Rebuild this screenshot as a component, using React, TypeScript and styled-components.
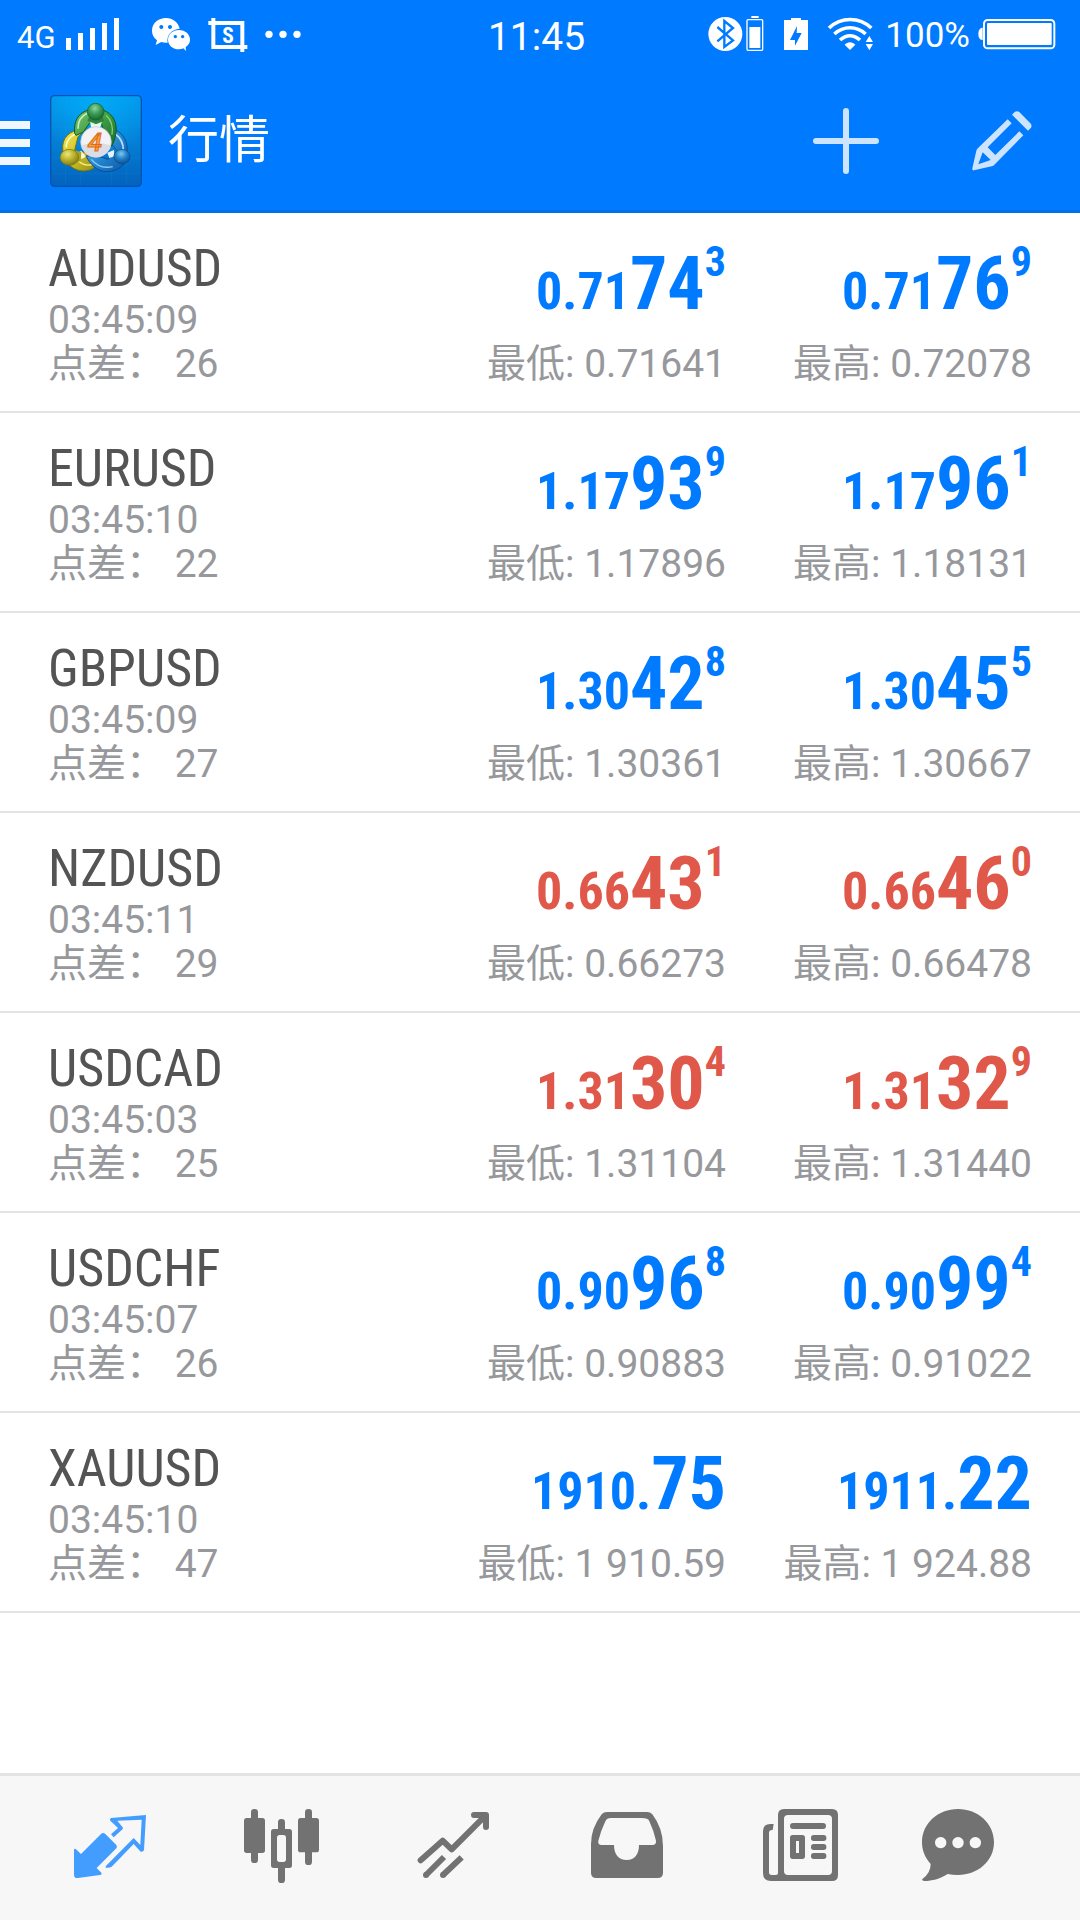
import React from "react";
import styled, { createGlobalStyle } from "styled-components";

const GlobalStyle = createGlobalStyle`
  *, *::before, *::after { box-sizing: border-box; }
  body {
    margin: 0;
    background: #ffffff;
    font-family: Roboto, "Noto Sans CJK SC", sans-serif;
  }
`;

const Page = styled.div`
  display: flex;
  flex-direction: column;
  min-height: 100vh;
`;

/* ---------- status bar ---------- */

const StatusBar = styled.div`
  display: grid;
  grid-template-columns: 1fr auto 1fr;
  align-items: center;
  height: 68px;
  padding: 0 24px 0 17px;
  background: #007aff;
  color: #ffffff;
`;

const StatusGroup = styled.div<{ $end?: boolean }>`
  display: flex;
  align-items: center;
  justify-content: ${(p) => (p.$end ? "flex-end" : "flex-start")};
`;

const StatusText = styled.span<{ $size: number }>`
  font-size: ${(p) => p.$size}px;
  line-height: 36px;
`;

const Network = styled(StatusText)`
  padding-top: 8px;
`;

const Percent = styled(StatusText)`
  padding: 4px 0 0 10px;
`;

const Clock = styled.time`
  font-size: 39px;
  line-height: 40px;
  padding-top: 5px;
`;

const StatusIcon = styled.svg<{ $gap?: number }>`
  flex: none;
  display: block;
  height: 36px;
  margin-left: ${(p) => p.$gap ?? 0}px;
  fill: #ffffff;
`;

/* ---------- title bar ---------- */

const TitleBar = styled.header`
  display: flex;
  align-items: center;
  height: 145px;
  background: #007aff;
  box-shadow: inset 0 -3px 0 #0070e6;
  color: #ffffff;
`;

const IconButton = styled.button`
  display: flex;
  align-items: center;
  justify-content: center;
  padding: 0;
  border: 0;
  background: none;
  cursor: pointer;
`;

const MenuButton = styled(IconButton)`
  gap: 20px;
`;

const ActionButton = styled(IconButton)`
  width: 156px;
  height: 144px;
`;

const Title = styled.h1`
  flex: 1;
  margin: 0 0 0 26px;
  font-size: 51px;
  line-height: 60px;
  font-weight: 400;
`;

/* ---------- quotes ---------- */

const QuoteList = styled.ul`
  flex: 1;
  margin: 0;
  padding: 0;
  list-style: none;
`;

const QuoteRow = styled.li`
  display: grid;
  grid-template-columns: 1fr 306px 306px;
  padding: 27px 48px 25px;
  border-bottom: 2px solid #e4e4e4;
  color: #97989c;
  font-size: 39px;
  line-height: 44px;
`;

const Symbol = styled.h2`
  margin: 0;
  color: #545454;
  font: 400 52px/58px "Roboto Condensed", Roboto, sans-serif;
`;

const Line = styled.div`
  height: 44px;
  white-space: pre;
`;

const PriceColumn = styled.div`
  display: flex;
  flex-direction: column;
  gap: 14px;
  text-align: right;
`;

const Price = styled.div<{ $down?: boolean }>`
  height: 88px;
  color: ${(p) => (p.$down ? "#df5849" : "#007aff")};
  font: 700 52px/88px "Roboto Condensed", Roboto, sans-serif;
  white-space: nowrap;
`;

const Pips = styled.span`
  font-size: 74px;
`;

const Fraction = styled.span`
  font-size: 42px;
  line-height: 42px;
  vertical-align: 33px;
`;

/* ---------- bottom navigation ---------- */

const BottomNav = styled.nav`
  display: flex;
  justify-content: space-between;
  padding: 0 24px;
  border-top: 3px solid #e4e4e4;
  background: #f7f7f7;
`;

const NavButton = styled(IconButton)<{ $active?: boolean }>`
  flex: 1;
  height: 144px;
  color: ${(p) => (p.$active ? "#429dff" : "#727272")};
`;

const NavIcon = styled.svg`
  display: block;
  width: 96px;
  height: 96px;
`;

type Part = [base: string, pips: string, fraction?: string];

interface Quote {
  symbol: string;
  time: string;
  spread: string;
  bid: Part;
  ask: Part;
  low: string;
  high: string;
  down?: boolean;
}

const quotes: Quote[] = [
  { symbol: "AUDUSD", time: "03:45:09", spread: "26", bid: ["0.71", "74", "3"], ask: ["0.71", "76", "9"], low: "0.71641", high: "0.72078" },
  { symbol: "EURUSD", time: "03:45:10", spread: "22", bid: ["1.17", "93", "9"], ask: ["1.17", "96", "1"], low: "1.17896", high: "1.18131" },
  { symbol: "GBPUSD", time: "03:45:09", spread: "27", bid: ["1.30", "42", "8"], ask: ["1.30", "45", "5"], low: "1.30361", high: "1.30667" },
  { symbol: "NZDUSD", time: "03:45:11", spread: "29", bid: ["0.66", "43", "1"], ask: ["0.66", "46", "0"], low: "0.66273", high: "0.66478", down: true },
  { symbol: "USDCAD", time: "03:45:03", spread: "25", bid: ["1.31", "30", "4"], ask: ["1.31", "32", "9"], low: "1.31104", high: "1.31440", down: true },
  { symbol: "USDCHF", time: "03:45:07", spread: "26", bid: ["0.90", "96", "8"], ask: ["0.90", "99", "4"], low: "0.90883", high: "0.91022" },
  { symbol: "XAUUSD", time: "03:45:10", spread: "47", bid: ["1910.", "75"], ask: ["1911.", "22"], low: "1 910.59", high: "1 924.88" },
];

function PriceValue({ parts, down }: { parts: Part; down?: boolean }) {
  const [base, pips, fraction] = parts;
  return (
    <Price $down={down}>
      {base}
      <Pips>{pips}</Pips>
      {fraction && <Fraction>{fraction}</Fraction>}
    </Price>
  );
}

function AppLogo() {
  return (
    <svg width="92" height="92" viewBox="12 15 276 276" aria-hidden="true">
      <defs>
        <linearGradient id="tile" x1="0" y1="0" x2="0" y2="1">
          <stop offset="0" stopColor="#0398ec" />
          <stop offset="0.5" stopColor="#0480d6" />
          <stop offset="1" stopColor="#0362bc" />
        </linearGradient>
        <radialGradient id="glow" cx="0.5" cy="0.1" r="0.6">
          <stop offset="0" stopColor="#00b4ff" stopOpacity="0.7" />
          <stop offset="1" stopColor="#00b4ff" stopOpacity="0" />
        </radialGradient>
        <linearGradient id="green" x1="0" y1="0" x2="1" y2="1">
          <stop offset="0" stopColor="#7cc576" />
          <stop offset="0.5" stopColor="#3c9a3f" />
          <stop offset="1" stopColor="#14662a" />
        </linearGradient>
        <linearGradient id="yellow" x1="0" y1="0" x2="1" y2="1">
          <stop offset="0" stopColor="#f4e95a" />
          <stop offset="0.5" stopColor="#cfc226" />
          <stop offset="1" stopColor="#8f8a14" />
        </linearGradient>
        <linearGradient id="blue" x1="0" y1="0" x2="1" y2="1">
          <stop offset="0" stopColor="#6fc0f2" />
          <stop offset="0.5" stopColor="#2589d2" />
          <stop offset="1" stopColor="#0a55a4" />
        </linearGradient>
        <radialGradient id="greenBall" cx="0.45" cy="0.3" r="0.7">
          <stop offset="0" stopColor="#8ed6a0" />
          <stop offset="0.5" stopColor="#3b9a55" />
          <stop offset="1" stopColor="#176a30" />
        </radialGradient>
        <radialGradient id="yellowBall" cx="0.4" cy="0.3" r="0.75">
          <stop offset="0" stopColor="#eee87c" />
          <stop offset="0.5" stopColor="#b9b02b" />
          <stop offset="1" stopColor="#7b7714" />
        </radialGradient>
        <radialGradient id="blueBall" cx="0.45" cy="0.3" r="0.7">
          <stop offset="0" stopColor="#7cc9f4" />
          <stop offset="0.5" stopColor="#2382c6" />
          <stop offset="1" stopColor="#0b4f95" />
        </radialGradient>
      </defs>
      <rect x="14" y="17" width="272" height="272" rx="12" fill="url(#tile)" stroke="#0553ac" strokeWidth="4" />
      <rect x="16" y="19" width="268" height="268" rx="10" fill="url(#glow)" />
      <path d="M58 19V287M104 19V287M196 19V287M242 19V287M16 66H284M16 112H284M16 204H284M16 250H284" stroke="#35a6ee" strokeOpacity="0.18" strokeWidth="2" />

      <g strokeLinejoin="round">
        <path d="M122 117C84 116 52 133 50 168C49 205 70 240 110 243C134 243 148 234 156 220L150 190L112 186L104 196L84 188L96 140Z" fill="url(#yellow)" stroke="#77720d" strokeWidth="3" />
        <path d="M60 172C62 145 84 128 112 124" fill="none" stroke="#fffbb8" strokeWidth="5" />
        <path d="M98 214C112 226 130 228 146 220" fill="none" stroke="#f6ef8d" strokeWidth="4" />
        <path d="M90 192L106 182L120 200L108 206L92 206Z" fill="#fbf9d5" />

        <path d="M198 116C224 124 242 144 244 176L240 206C234 232 210 244 180 245C150 242 134 224 120 198L150 196L186 208L214 184L196 160Z" fill="url(#blue)" stroke="#0a4d99" strokeWidth="3" />
        <path d="M208 132C224 144 232 160 232 180" fill="none" stroke="#b8e1fb" strokeWidth="5" />
        <path d="M136 208C152 228 172 236 200 230" fill="none" stroke="#8fcdf6" strokeWidth="4" />
        <path d="M184 188L204 180L208 198L190 204Z" fill="#e3f4ff" />

        <path d="M86 130C82 92 98 68 128 60L170 60C202 70 216 100 209 134C205 158 196 172 184 180L176 130L166 100L130 100L112 126L90 136Z" fill="url(#green)" stroke="#14591f" strokeWidth="3" />
        <path d="M96 116C96 92 106 78 124 70" fill="none" stroke="#c9edbf" strokeWidth="5" />
        <path d="M180 76C196 90 202 108 198 134" fill="none" stroke="#8acb84" strokeWidth="4" />
        <path d="M132 96L150 102L168 96L162 114H136Z" fill="#e8f8e4" />
      </g>

      <path d="M132 74L168 74L174 94L150 98L124 94Z" fill="#2a8440" />
      <ellipse cx="149" cy="65" rx="25" ry="25" fill="url(#greenBall)" stroke="#175d2b" strokeWidth="2" />
      <path d="M82 180L106 186L104 214L80 218Z" fill="#aaa224" />
      <ellipse cx="70" cy="202" rx="28" ry="24" fill="url(#yellowBall)" stroke="#77720d" strokeWidth="2" />
      <path d="M206 178L234 182L226 212L202 206Z" fill="#1d6fb5" />
      <ellipse cx="228" cy="200" rx="24" ry="22" fill="url(#blueBall)" stroke="#0a4d99" strokeWidth="2" />

      <circle cx="150" cy="156" r="46" fill="#f2f2f6" stroke="#c4c6cf" strokeWidth="2" />
      <path d="M106 166A45 45 0 0 0 194 166Q150 150 106 166Z" fill="#dcdde4" />
      <text x="147" y="183" textAnchor="middle" fontFamily="Roboto, sans-serif" fontStyle="italic" fontWeight="500" fontSize="78" fill="#f9a63a" stroke="#e06a1c" strokeWidth="3">4</text>
    </svg>
  );
}

function StatusLeft() {
  return (
    <StatusGroup>
      <Network $size={31}>4G</Network>
      <StatusIcon $gap={9} width="55" viewBox="195 48 165 108" aria-hidden="true">
        <path d="M198 114h15v36h-15zM234 99h15v51h-15zM270 84h15v66h-15zM306 69h15v81h-15zM342 54h15v96h-15z" />
      </StatusIcon>
      <StatusIcon $gap={31} width="40" viewBox="453 48 120 108" aria-hidden="true">
        <path fillRule="evenodd" d="M498 54C475 54 456 69 456 92C456 104 461 113 471 121L467 135L484 126C490 128 496 129 503 128C499 106 514 88 539 86C535 67 518 54 498 54ZM484 75a6 6 0 1 1-.1 0ZM510 75a6 6 0 1 1-.1 0Z" />
        <path fillRule="evenodd" d="M537 90C518 90 504 103 504 119C504 136 519 148 537 148C542 148 546 147 550 145L558 153L557 141C566 135 570 128 570 119C570 103 556 90 537 90ZM526 105a5 5 0 1 1-.1 0ZM548 105a5 5 0 1 1-.1 0Z" />
      </StatusIcon>
      <StatusIcon $gap={17} width="40" viewBox="623 48 120 108" aria-hidden="true">
        <path fillRule="evenodd" d="M633 54h12v9h87v72h9v12h-9v9h-12v-9h-87v-72h-9v-12h9ZM645 75v60h75v-60Z" />
        <text x="683" y="129" textAnchor="middle" fontFamily="Roboto Condensed, Roboto, sans-serif" fontWeight="700" fontSize="64">S</text>
      </StatusIcon>
      <StatusIcon $gap={17} width="36" viewBox="794 48 108 108" aria-hidden="true">
        <circle cx="806" cy="103" r="11" />
        <circle cx="848" cy="103" r="11" />
        <circle cx="890" cy="103" r="11" />
      </StatusIcon>
    </StatusGroup>
  );
}

function StatusRight() {
  return (
    <StatusGroup $end>
      <StatusIcon width="56" viewBox="56 48 168 108" aria-hidden="true">
        <circle cx="108" cy="102" r="51" />
        <path d="M84 81L131 121L105 141V63L131 84L84 124" fill="none" stroke="#007aff" strokeWidth="7" />
        <path d="M186 48h22v6h-22z" />
        <rect x="173" y="59" width="47" height="92" rx="3" fill="none" stroke="#ffffff" strokeWidth="4" />
        <path d="M180 81h33v63h-33z" />
      </StatusIcon>
      <StatusIcon $gap={19} width="26" viewBox="279 48 78 108" aria-hidden="true">
        <path fillRule="evenodd" d="M282 60h21v-6h30v6h21v90h-72ZM321 78L300 120H315V137L335 99H320Z" />
      </StatusIcon>
      <StatusIcon $gap={18} width="48" viewBox="411 48 144 108" aria-hidden="true">
        <g fill="none" stroke="#ffffff" strokeWidth="11">
          <path d="M417 84C453 50 508 50 544 84" />
          <path d="M433 102C461 77 499 77 527 102" />
          <path d="M450 120C469 103 491 103 510 120" />
        </g>
        <path d="M464 134C472 124 488 124 496 134L480 150ZM527 126L538 108L549 126ZM527 132H549L538 151Z" />
      </StatusIcon>
      <Percent $size={35}>100%</Percent>
      <StatusIcon $gap={8} width="78" viewBox="866 48 234 108" aria-hidden="true">
        <path d="M880 83C872 83 867 90 867 102C867 114 872 120 880 120Z" />
        <rect x="884" y="60" width="211" height="85" rx="11" fill="none" stroke="#ffffff" strokeWidth="6" />
        <rect x="893" y="69" width="194" height="66" rx="3" />
      </StatusIcon>
    </StatusGroup>
  );
}

function QuotesIcon() {
  return (
    <NavIcon viewBox="186 120 288 288" fill="currentColor" aria-hidden="true">
      <path d="M222 268Q224 265 228 268L243 282L303 222Q309 216 316 222L349 255Q353 260 349 265L290 324L304 338Q307 343 300 345L234 354Q222 355 222 344Z" />
      <path fillRule="evenodd" d="M333 174L438 165L432 270Q430 276 422 275L401 252L335 320Q330 324 317 323Q316 319 320 316L401 234L421 255L425 179L352 182L369 203Q369 207 366 209L341 232L333 223L354 204L331 182Q328 176 333 174Z" />
    </NavIcon>
  );
}

function ChartIcon() {
  return (
    <NavIcon viewBox="702 120 288 288" fill="currentColor" aria-hidden="true">
      <rect x="753" y="147" width="21" height="162" rx="10" />
      <rect x="732" y="174" width="63" height="105" rx="8" />
      <rect x="915" y="147" width="21" height="168" rx="10" />
      <rect x="894" y="174" width="63" height="103" rx="8" />
      <rect x="834" y="177" width="21" height="50" rx="10" />
      <rect x="834" y="310" width="21" height="59" rx="10" />
      <rect x="813" y="207" width="63" height="117" rx="8" />
      <rect x="831" y="225" width="27" height="81" rx="8" fill="#f7f7f7" />
    </NavIcon>
  );
}

function TradeIcon() {
  return (
    <NavIcon viewBox="138 120 288 288" fill="none" stroke="currentColor" strokeWidth="18" aria-hidden="true">
      <path d="M182 301L248 242L275 268L374 169" strokeLinecap="round" strokeLinejoin="round" />
      <path d="M342 165H378V201" strokeLinecap="round" strokeLinejoin="round" />
      <path d="M355 174H378V196Z" fill="currentColor" stroke="none" />
      <path d="M198 345L252 291M249 345L305 292" />
      <circle cx="198" cy="345" r="9" fill="currentColor" stroke="none" />
      <circle cx="249" cy="345" r="9" fill="currentColor" stroke="none" />
    </NavIcon>
  );
}

function HistoryIcon() {
  return (
    <NavIcon viewBox="654 120 288 288" fill="currentColor" aria-hidden="true">
      <path fillRule="evenodd" d="M741 156H861Q871 156 877 163Q909 205 909 258V338Q909 354 893 354H709Q693 354 693 338V252Q693 205 725 163Q731 156 741 156ZM752 174Q741 174 736 184Q722 214 715 242Q713 255 725 255H762C762 282 776 300 800 300C824 300 837 282 837 255H877Q889 255 888 242Q882 214 868 184Q865 174 845 174Z" />
    </NavIcon>
  );
}

function NewsIcon() {
  return (
    <NavIcon viewBox="90 120 288 288" fill="currentColor" aria-hidden="true">
      <path fillRule="evenodd" d="M192 147H336Q354 147 354 165V345Q354 363 336 363H153Q129 363 129 339V214Q129 192 151 192H161L158 210Q147 209 147 219V337Q147 345 155 345H168Q174 345 174 339V165Q174 147 192 147ZM204 165Q192 165 192 177V333Q192 345 204 345H324Q336 345 336 333V177Q336 165 324 165Z" />
      <rect x="210" y="189" width="108" height="18" rx="9" />
      <path fillRule="evenodd" d="M218 225H247Q255 225 255 233V289Q255 297 247 297H218Q210 297 210 289V233Q210 225 218 225ZM228 243V279H237V243Z" />
      <rect x="273" y="225" width="46" height="18" rx="8" />
      <rect x="273" y="252" width="46" height="18" rx="8" />
      <rect x="273" y="279" width="46" height="18" rx="8" />
    </NavIcon>
  );
}

function ChatIcon() {
  return (
    <NavIcon viewBox="606 120 288 288" fill="currentColor" aria-hidden="true">
      <path fillRule="evenodd" d="M714 147C774 147 822 190 822 247C822 303 774 345 714 345Q697 345 683 342C658 357 637 363 613 363Q603 361 608 356Q632 339 632 312C615 293 606 272 606 247C606 190 654 147 714 147ZM662 231a17 17 0 1 0 .1 0ZM714 231a17 17 0 1 0 .1 0ZM766 231a17 17 0 1 0 .1 0Z" />
    </NavIcon>
  );
}

const tabs = [
  { label: "行情", Icon: QuotesIcon, active: true },
  { label: "图表", Icon: ChartIcon },
  { label: "交易", Icon: TradeIcon },
  { label: "历史", Icon: HistoryIcon },
  { label: "新闻", Icon: NewsIcon },
  { label: "聊天", Icon: ChatIcon },
];

export default function App() {
  return (
    <Page>
      <GlobalStyle />
      <StatusBar>
        <StatusLeft />
        <Clock>11:45</Clock>
        <StatusRight />
      </StatusBar>

      <TitleBar>
        <MenuButton type="button" aria-label="菜单">
          <svg width="30" height="48" viewBox="0 -4 30 48" fill="#f0f7ff" aria-hidden="true">
            <path d="M0 0h30v8H0zM0 18h30v8H0zM0 36h30v8H0z" />
          </svg>
          <AppLogo />
        </MenuButton>
        <Title>行情</Title>
        <ActionButton type="button" aria-label="添加">
          <svg width="66" height="66" viewBox="0 0 66 66" stroke="#cce4ff" strokeWidth="6" strokeLinecap="round" aria-hidden="true">
            <path d="M33 3V63M3 33H63" />
          </svg>
        </ActionButton>
        <ActionButton type="button" aria-label="编辑">
          <svg width="60" height="60" viewBox="848 332 180 180" fill="#cce4ff" aria-hidden="true">
            <path d="M968 343L976 335Q983 330 990 335L1023 369Q1029 376 1025 382L1016 391Z" />
            <path fillRule="evenodd" d="M955 357L967 369L895 441L918 464L990 393L1002 405L918 490Q914 496 907 498L854 510Q848 511 849 504L861 451Q862 446 867 442ZM880 456L867 492L904 479Z" />
          </svg>
        </ActionButton>
      </TitleBar>

      <QuoteList>
        {quotes.map((q) => (
          <QuoteRow key={q.symbol}>
            <div>
              <Symbol>{q.symbol}</Symbol>
              <Line>{q.time}</Line>
              <Line>点差： {q.spread}</Line>
            </div>
            <PriceColumn>
              <PriceValue parts={q.bid} down={q.down} />
              <Line>最低: {q.low}</Line>
            </PriceColumn>
            <PriceColumn>
              <PriceValue parts={q.ask} down={q.down} />
              <Line>最高: {q.high}</Line>
            </PriceColumn>
          </QuoteRow>
        ))}
      </QuoteList>

      <BottomNav>
        {tabs.map(({ label, Icon, active }) => (
          <NavButton key={label} type="button" aria-label={label} $active={active}>
            <Icon />
          </NavButton>
        ))}
      </BottomNav>
    </Page>
  );
}
